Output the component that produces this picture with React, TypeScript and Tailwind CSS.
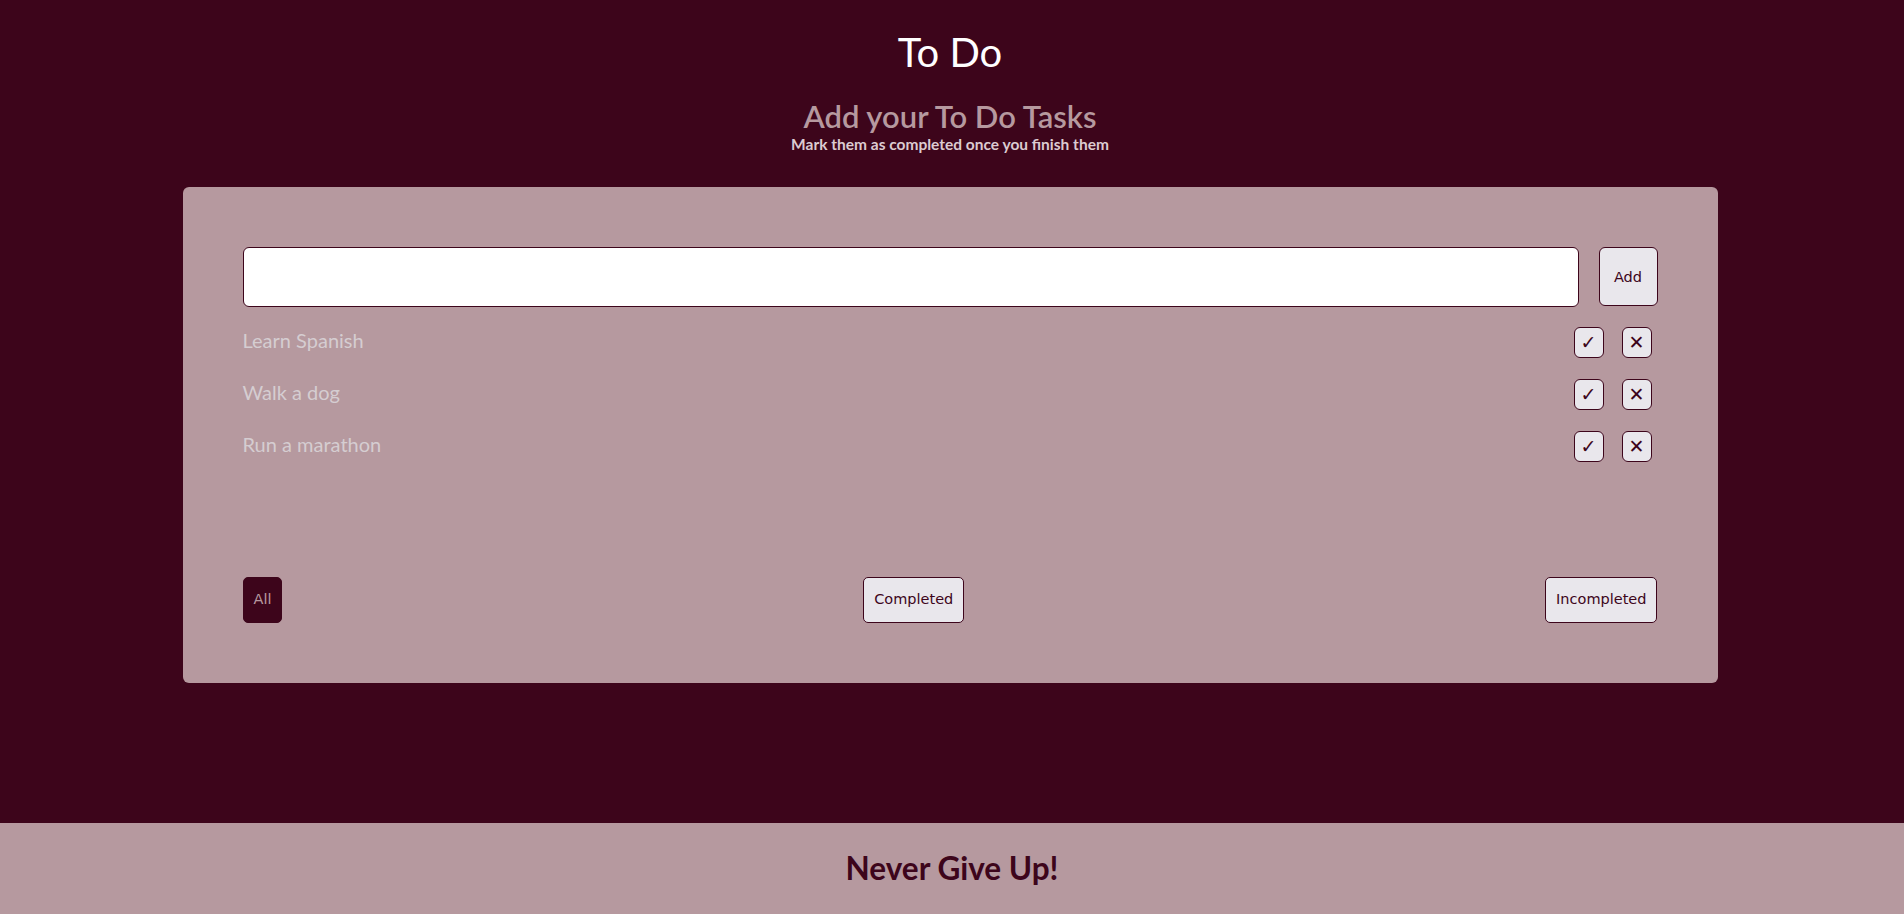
import { useState } from "react";

type Task = { id: number; text: string; done: boolean };

const initialTasks: Task[] = [
  { id: 1, text: "Learn Spanish", done: false },
  { id: 2, text: "Walk a dog", done: false },
  { id: 3, text: "Run a marathon", done: false },
];

const btnFont = { fontFamily: '"DejaVu Sans", Verdana, sans-serif' };

export default function App() {
  const [tasks, setTasks] = useState<Task[]>(initialTasks);
  const [text, setText] = useState("");
  const [filter, setFilter] = useState<"all" | "done" | "todo">("all");

  const shown = tasks.filter((t) =>
    filter === "all" ? true : filter === "done" ? t.done : !t.done
  );

  const filterBtn = (key: "all" | "done" | "todo", label: string) => (
    <button
      onClick={() => setFilter(key)}
      style={btnFont}
      className={
        filter === key
          ? "h-[46px] px-[10px] rounded-[5px] border border-[#3d051b] bg-[#3d051b] text-[#b6999f] text-[14.5px]"
          : "h-[46px] px-[10px] rounded-[5px] border border-[#3d051b] bg-[#e9e7ec] text-[#3d051b] text-[14.5px]"
      }
    >
      {label}
    </button>
  );

  return (
    <div
      className="min-h-screen flex flex-col bg-[#3d051b]"
      style={{ fontFamily: "Lato, 'Open Sans', sans-serif" }}
    >
      <main className="flex-1 flex flex-col items-center pr-[4px]">
        <h1 className="mt-[28px] text-[40px] leading-[48px] text-white">To Do</h1>
        <h2 className="mt-[22px] text-[31px] leading-[37px] font-semibold text-[#b6999f]">
          Add your To Do Tasks
        </h2>
        <p className="text-[15.5px] leading-[18px] font-bold text-[#dccbd1]">
          Mark them as completed once you finish them
        </p>

        <section className="mt-[34px] w-[1535px] h-[496px] rounded-[6px] bg-[#b6999f] p-[60px] flex flex-col">
          <form
            className="flex gap-[20px]"
            onSubmit={(e) => {
              e.preventDefault();
              if (!text.trim()) return;
              setTasks([...tasks, { id: Date.now(), text: text.trim(), done: false }]);
              setText("");
            }}
          >
            <input
              value={text}
              onChange={(e) => setText(e.target.value)}
              className="flex-1 h-[60px] rounded-[6px] border border-[#3d051b] bg-white px-3 outline-none"
            />
            <button
              type="submit"
              style={btnFont}
              className="w-[59px] h-[59px] rounded-[6px] border border-[#3d051b] bg-[#e9e7ec] text-[#3d051b] text-[14.5px] pt-[3px]"
            >
              Add
            </button>
          </form>

          <ul className="mt-[20px] flex flex-col gap-[21px]">
            {shown.map((t) => (
              <li key={t.id} className="flex items-center justify-between h-[31px]">
                <span
                  className={
                    t.done
                      ? "text-[20px] leading-[24px] -mt-[6px] text-[#d5cdd1] line-through"
                      : "text-[20px] leading-[24px] -mt-[6px] text-[#d5cdd1]"
                  }
                >
                  {t.text}
                </span>
                <div className="flex gap-[18px] mr-[6px]">
                  <button
                    onClick={() =>
                      setTasks(tasks.map((x) => (x.id === t.id ? { ...x, done: !x.done } : x)))
                    }
                    style={btnFont}
                    className="w-[30px] h-[31px] rounded-[6px] border border-[#3d051b] bg-[#e9e7ec] text-[#3d051b] text-[19px] font-bold flex items-center justify-center"
                  >
                    ✓
                  </button>
                  <button
                    onClick={() => setTasks(tasks.filter((x) => x.id !== t.id))}
                    style={btnFont}
                    className="w-[30px] h-[31px] rounded-[6px] border border-[#3d051b] bg-[#e9e7ec] text-[#3d051b] text-[19px] font-bold flex items-center justify-center"
                  >
                    ✕
                  </button>
                </div>
              </li>
            ))}
          </ul>

          <div className="mt-auto flex justify-between items-center">
            {filterBtn("all", "All")}
            {filterBtn("done", "Completed")}
            {filterBtn("todo", "Incompleted")}
          </div>
        </section>
      </main>

      <footer className="h-[91px] bg-[#b6999f] flex items-center justify-center">
        <p className="text-[31.5px] font-bold text-[#3d051b]">Never Give Up!</p>
      </footer>
    </div>
  );
}
